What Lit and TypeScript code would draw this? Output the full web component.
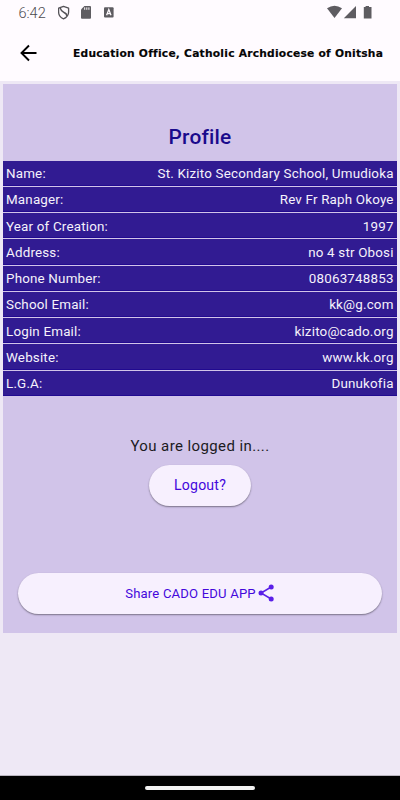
import { LitElement, html, css } from "lit";
import { customElement } from "lit/decorators.js";

const ROWS: { label: string; value: string }[] = [
  { label: "Name:", value: "St. Kizito Secondary School, Umudioka" },
  { label: "Manager:", value: "Rev Fr Raph Okoye" },
  { label: "Year of Creation:", value: "1997" },
  { label: "Address:", value: "no 4 str Obosi" },
  { label: "Phone Number:", value: "08063748853" },
  { label: "School Email:", value: "kk@g.com" },
  { label: "Login Email:", value: "kizito@cado.org" },
  { label: "Website:", value: "www.kk.org" },
  { label: "L.G.A:", value: "Dunukofia" },
];

@customElement("status-bar")
export class StatusBar extends LitElement {
  static styles = css`
    :host { display: flex; justify-content: space-between; height: 25px; box-sizing: border-box; padding: 0 28px 0 18px; color: #5e5c61; }
    .left { display: flex; align-items: center; }
    .time { width: 39.500px; padding-left: 0.500px; padding-top: 1px; font-size: 14.500px; line-height: 25px; font-weight: 300; color: #4c4a4f; }
    svg { display: block; }
  `;
  render() {
    return html`
      <div class="left">
        <span class="time">6:42</span>
        <svg width="58" height="25" viewBox="0 0 58 25">
          <path d="M5.5 6.4 10.6 8.2V12c0 3-2 5.6-5.1 6.8C2.400 17.600.6 15 .6 12V8.200Z" fill="none" stroke="#555358" stroke-width="1.300" stroke-linejoin="round"/>
          <path d="M2.200 8 Q3.200 11.500 6 12.500 T8.800 16" fill="none" stroke="#555358" stroke-width="1.400"/>
          <path d="M26.400 6H32q1 0 1 1V17.700q0 1-1 1H24q-1 0-1-1V9.500Z" fill="currentColor"/>
          <path d="M26.700 7.400v2.400M28.800 7.400v2.400M30.900 7.400v2.400" stroke="#fffbff" stroke-width="1"/>
          <rect x="46" y="7.200" width="9.600" height="10.400" rx="1" fill="currentColor"/>
          <path d="M48.600 15.300 50.800 9.500 53 15.300M49.400 13.600H52.200" fill="none" stroke="#fffbff" stroke-width="1.300"/>
        </svg>
      </div>
      <svg width="45" height="25" viewBox="0 0 45 25">
        <path d="M0 8.300Q7.500 3.200 15 8.300L7.500 18Z" fill="currentColor"/>
        <path d="M16.800 18.300 29 6V18.300Z" fill="currentColor"/>
        <path d="M37 6.900h1.600V5.900h3.400v1H44.500V18.600H36.800V6.900Z" fill="currentColor"/>
      </svg>
    `;
  }
}

@customElement("app-header")
export class AppHeader extends LitElement {
  static styles = css`
    :host { display: flex; align-items: center; height: 56px; box-sizing: border-box; padding-left: 20px; }
    svg { display: block; width: 53px; height: 18px; flex: none; }
    .title { margin: 0; font: 700 10.700px "DejaVu Sans", sans-serif; letter-spacing: 0.230px; -webkit-text-stroke: 0.150px #050505; white-space: nowrap; color: #050505; }
  `;
  render() {
    return html`
      <svg viewBox="0 0 53 18"><path d="M16.500 9H2M9 1.500 1.500 9 9 16.500" fill="none" stroke="#000" stroke-width="1.900"/></svg>
      <h1 class="title">Education Office, Catholic Archdiocese of Onitsha</h1>
    `;
  }
}

@customElement("app-root")
export class AppRoot extends LitElement {
  static styles = css`
    :host { display: flex; flex-direction: column; height: 800px; background: #eee8f5; font-family: Roboto, sans-serif; overflow: hidden; }
    .top { background: #fffbff; height: 81px; flex: none; }
    .card { margin: 3px 3px 0; height: 549px; background: #d1c4e9; display: flex; flex-direction: column; align-items: center; flex: none; }
    .heading { margin: 0; height: 76.600px; box-sizing: border-box; padding-top: 41px; font-size: 20.900px; line-height: 25px; font-weight: 550; letter-spacing: 0.200px; color: #1a0a8c; }
    .table { width: 100%; display: flex; flex-direction: column; gap: 1px; }
    .row { display: flex; justify-content: space-between; align-items: center; height: 25.280px; box-sizing: border-box; padding: 1.500px 3.400px 0 3px; background: #311b92; border-bottom: 1px solid #210a90; color: #f5f2fb; font-size: 13.400px; letter-spacing: 0.180px; white-space: nowrap; }
    .message { margin: 40px 0 0; font-size: 15px; line-height: 20px; letter-spacing: 0.400px; color: #1c1b1f; }
    button { font-family: inherit; font-weight: 450; border: 0; padding: 0; background: #f7f0fe; color: #4408dc; border-radius: 21px; box-shadow: 0 1px 2px #0000004d, 0 1px 1px #00000026; height: 41px; display: flex; align-items: center; justify-content: center; flex: none; }
    .logout { width: 102px; margin-top: 9px; font-size: 14.100px; letter-spacing: 0.200px; }
    .share { width: 364px; margin-top: 67px; font-size: 13.100px; letter-spacing: 0.180px; }
    .share svg { margin-left: 1px; display: block; }
    .nav { margin-top: auto; height: 24px; background: #000; border-top: 1px solid #b9b5bf; display: flex; justify-content: center; box-sizing: content-box; }
    .pill { width: 110px; height: 4px; border-radius: 2px; background: #f2f2f2; margin-top: 10px; }
  `;
  render() {
    return html`
      <div class="top"><status-bar></status-bar><app-header></app-header></div>
      <section class="card">
        <h2 class="heading">Profile</h2>
        <div class="table">
          ${ROWS.map((r) => html`<div class="row"><span>${r.label}</span><span>${r.value}</span></div>`)}
        </div>
        <p class="message">You are logged in....</p>
        <button class="logout">Logout?</button>
        <button class="share">
          <span>Share CADO EDU APP</span>
          <svg width="18" height="20" viewBox="0 0 18 20">
            <path d="M14.200 4 4 10 14.200 16" fill="none" stroke="#5a1fe8" stroke-width="1.500"/>
            <circle cx="14.200" cy="4" r="2.500" fill="#5a1fe8"/><circle cx="4" cy="10" r="2.500" fill="#5a1fe8"/><circle cx="14.200" cy="16" r="2.500" fill="#5a1fe8"/>
          </svg>
        </button>
      </section>
      <div class="nav"><div class="pill"></div></div>
    `;
  }
}
